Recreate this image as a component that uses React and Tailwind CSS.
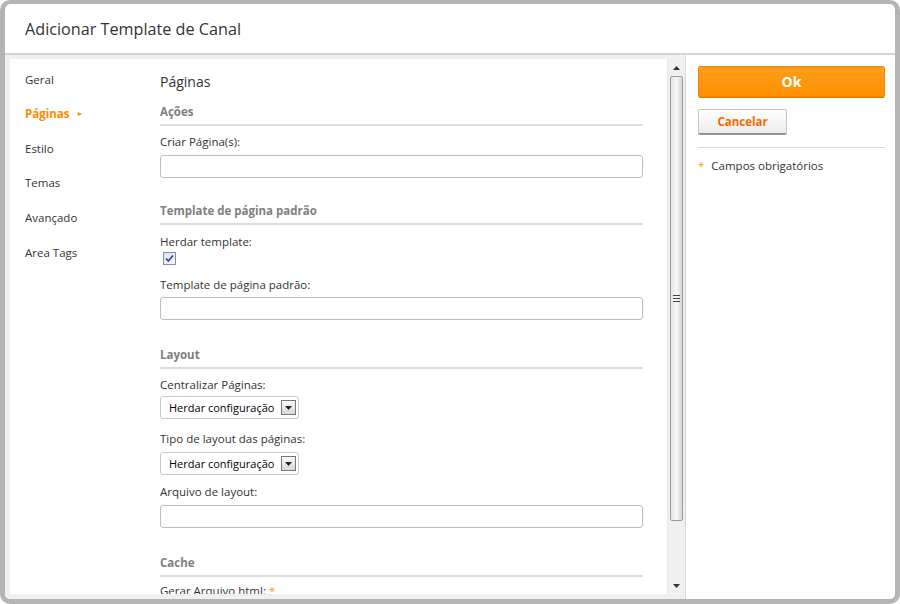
import React from "react";

const navItems = ["Geral", "Páginas", "Estilo", "Temas", "Avançado", "Area Tags"];

function SectionTitle({ children, className = "" }) {
  return (
    <div className={"shrink-0 border-b-2 border-[#dcdcdc] pb-[4px] text-[11.5px] font-bold leading-[16px] text-[#808080] " + className}>
      {children}
    </div>
  );
}

function Label({ children, className = "" }) {
  return <div className={"shrink-0 text-[11.5px] leading-[16px] text-[#333] " + className}>{children}</div>;
}

function TextInput({ className = "mt-[5px]" }) {
  return <div className={"h-[23px] w-full shrink-0 rounded-[3px] border border-[#bdbdbd] bg-white " + className} />;
}

function SelectBox({ className = "" }) {
  return (
    <div className={"flex h-[23px] w-[139px] shrink-0 items-center justify-between rounded-[3px] border border-[#c8c8c8] bg-white pl-[8px] pr-[2px] text-[11px] leading-[16px] whitespace-nowrap text-black " + className}>
      <span>Herdar configuração</span>
      <span className="flex h-[15px] w-[15px] shrink-0 items-center justify-center border border-[#777] bg-gradient-to-b from-[#fafafa] to-[#d8d8d8]">
        <svg width="7" height="4" viewBox="0 0 7 4">
          <path d="M0 0h7L3.5 4z" fill="#222" />
        </svg>
      </span>
    </div>
  );
}

export default function App() {
  return (
    <div className="h-[604px] w-[900px] bg-white" style={{ fontFamily: '"Open Sans", sans-serif' }}>
      <div className="flex h-full flex-col overflow-hidden rounded-[10px] border-[5px] border-t-4 border-[#b4b4b4] bg-white">
        {/* Header */}
        <div className="flex h-[51px] shrink-0 items-center border-b-2 border-[#d4d4d4] pl-[20px] pt-[2px] text-[16.2px] text-[#333]">
          Adicionar Template de Canal
        </div>

        <div className="flex min-h-0 flex-1">
          {/* Left panel */}
          <div className="flex min-h-0 w-[680px] bg-[#f0f0f0] pb-[5px] pl-[5px] pt-[4px]">
            <div className="flex min-h-0 flex-1 overflow-hidden bg-white">
              {/* Nav */}
              <div className="w-[150px] shrink-0 pl-[15px] pt-[3px]">
                {navItems.map((item) => (
                  <div
                    key={item}
                    className={
                      item === "Páginas"
                        ? "flex h-[34.6px] items-center text-[11.5px] font-bold text-[#ff8a00]"
                        : "flex h-[34.6px] items-center text-[11.5px] text-[#333]"
                    }
                  >
                    {item}
                    {item === "Páginas" && <span className="ml-[7px] text-[7px]">►</span>}
                  </div>
                ))}
              </div>

              {/* Form */}
              <div className="flex w-[483px] shrink-0 flex-col pt-[14px]">
                <div className="shrink-0 text-[14px] leading-[18px] text-[#333]">Páginas</div>

                <SectionTitle className="mt-[13px]">Ações</SectionTitle>
                <Label className="mt-[8px]">Criar Página(s):</Label>
                <TextInput />

                <SectionTitle className="mt-[25px]">Template de página padrão</SectionTitle>
                <Label className="mt-[9px]">Herdar template:</Label>
                <div className="ml-[3px] mt-[2px] flex h-[13px] w-[13px] shrink-0 items-center justify-center border border-[#7f8db5] bg-gradient-to-br from-[#dfe4ee] to-[#f8f8fb]">
                  <svg width="9" height="9" viewBox="0 0 9 9">
                    <path d="M1 4.5l2.3 2.5L8 1.5" fill="none" stroke="#2d3f91" strokeWidth="1.6" />
                  </svg>
                </div>
                <Label className="mt-[12px]">Template de página padrão:</Label>
                <TextInput className="mt-[4px]" />

                <SectionTitle className="mt-[27px]">Layout</SectionTitle>
                <Label className="mt-[8px]">Centralizar Páginas:</Label>
                <SelectBox className="mt-[3px]" />
                <Label className="mt-[12px]">Tipo de layout das páginas:</Label>
                <SelectBox className="mt-[5px]" />
                <Label className="mt-[9px]">Arquivo de layout:</Label>
                <TextInput />

                <SectionTitle className="mt-[27px]">Cache</SectionTitle>
                <Label className="mt-[6px]">
                  Gerar Arquivo html: <span className="text-[#ff9900]">*</span>
                </Label>
              </div>

              {/* Scrollbar */}
              <div className="ml-auto flex w-[18px] shrink-0 flex-col border-l border-[#e6e6e6] bg-[#f0f0f0]">
                <div className="flex h-[17px] items-center justify-center">
                  <svg width="7" height="4" viewBox="0 0 7 4">
                    <path d="M3.5 0L7 4H0z" fill="#333" />
                  </svg>
                </div>
                <div className="mx-[2px] flex h-[445px] items-center justify-center rounded-[2px] border border-[#9a9a9a] bg-gradient-to-r from-[#e4e4e4] via-[#f7f7f7] to-[#d6d6d6]">
                  <div className="flex flex-col gap-[1.5px]">
                    <div className="h-[1.5px] w-[7px] bg-[#444]" />
                    <div className="h-[1.5px] w-[7px] bg-[#444]" />
                    <div className="h-[1.5px] w-[7px] bg-[#444]" />
                  </div>
                </div>
                <div className="flex-1" />
                <div className="flex h-[17px] items-center justify-center">
                  <svg width="7" height="4" viewBox="0 0 7 4">
                    <path d="M0 0h7L3.5 4z" fill="#333" />
                  </svg>
                </div>
              </div>
            </div>
          </div>

          {/* Right panel */}
          <div className="flex-1 border-l border-[#d8d8d8] pl-[12px] pr-[10px] pt-[11px]">
            <button className="flex h-[31px] w-full items-center justify-center rounded-[2px] border border-[#f08a00] bg-gradient-to-b from-[#ff9d1a] to-[#ff9000] text-[14px] font-bold text-white shadow-[0_1px_0_#d97a00]">
              Ok
            </button>
            <button className="mt-[12px] flex h-[25px] w-[89px] items-center justify-center rounded-[2px] border border-[#c4c4c4] border-b-[#8a8a8a] bg-gradient-to-b from-white to-[#ececec] text-[11.5px] font-bold text-[#f26b00] shadow-[0_1px_0_#9a9a9a]">
              Cancelar
            </button>
            <div className="mt-[13px] border-t border-[#d8d8d8]" />
            <div className="mt-[10px] flex items-center gap-[7px] text-[11.5px] leading-[16px] text-[#333]">
              <span className="text-[#ff9900]">*</span>
              <span>Campos obrigatórios</span>
            </div>
          </div>
        </div>
      </div>
    </div>
  );
}
